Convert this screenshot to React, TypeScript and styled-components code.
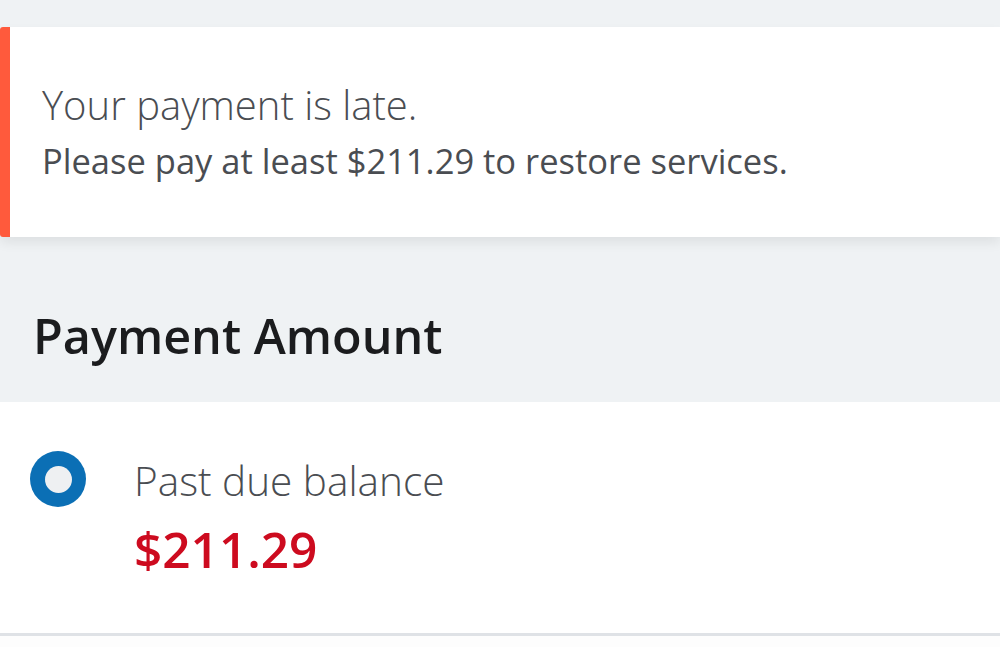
import React from "react";
import styled, { createGlobalStyle } from "styled-components";

const GlobalStyle = createGlobalStyle`
  html, body {
    margin: 0;
    padding: 0;
    background: #eff2f4;
    font-family: "Open Sans", "Noto Sans", "Liberation Sans", sans-serif;
  }
`;

const Page = styled.div`
  min-height: 647px;
  padding-top: 27px;
  display: flex;
  flex-direction: column;
  background: #eff2f4;
`;

const AlertCard = styled.div`
  background: #ffffff;
  border-left: 10px solid #ff5a3c;
  border-radius: 3px 0 0 3px;
  height: 210px;
  box-sizing: border-box;
  padding: 2px 0 0 32px;
  display: flex;
  flex-direction: column;
  justify-content: center;
  box-shadow: 0 6px 12px rgba(0, 0, 0, 0.07);
`;

const AlertTitle = styled.div`
  font-size: 40px;
  font-weight: 300;
  color: #4a4d52;
  line-height: 56px;
`;

const AlertText = styled.div`
  font-size: 34.5px;
  font-weight: 400;
  color: #4a4d52;
  line-height: 56px;
`;

const SectionHeader = styled.h2`
  margin: 0;
  height: 165px;
  box-sizing: border-box;
  padding: 30px 0 0 33px;
  display: flex;
  align-items: center;
  font-size: 48.5px;
  font-weight: 600;
  color: #1b1c1e;
`;

const OptionCard = styled.label`
  background: #ffffff;
  height: 234px;
  box-sizing: border-box;
  border-bottom: 3px solid #dfe2e6;
  padding: 49px 0 0 30px;
  display: flex;
  align-items: flex-start;
  gap: 48px;
`;

const Radio = styled.span`
  width: 56px;
  height: 56px;
  border-radius: 50%;
  background: #0b6fb5;
  display: flex;
  align-items: center;
  justify-content: center;
  flex-shrink: 0;
  &::after {
    content: "";
    width: 27px;
    height: 27px;
    border-radius: 50%;
    background: #eef0f2;
  }
`;

const OptionBody = styled.div`
  display: flex;
  flex-direction: column;
`;

const OptionLabel = styled.div`
  font-size: 40.5px;
  font-weight: 300;
  color: #4a4d52;
  line-height: 60px;
`;

const OptionAmount = styled.div`
  font-size: 49.5px;
  font-weight: 600;
  color: #cd0b1f;
  line-height: 76px;
`;

const Footer = styled.div`
  flex: 1;
  background: #fdfdfd;
`;

export default function App() {
  return (
    <>
      <GlobalStyle />
      <Page>
        <AlertCard>
          <AlertTitle>Your payment is late.</AlertTitle>
          <AlertText>Please pay at least $211.29 to restore services.</AlertText>
        </AlertCard>
        <SectionHeader>Payment Amount</SectionHeader>
        <OptionCard>
          <Radio />
          <OptionBody>
            <OptionLabel>Past due balance</OptionLabel>
            <OptionAmount>$211.29</OptionAmount>
          </OptionBody>
        </OptionCard>
        <Footer />
      </Page>
    </>
  );
}
